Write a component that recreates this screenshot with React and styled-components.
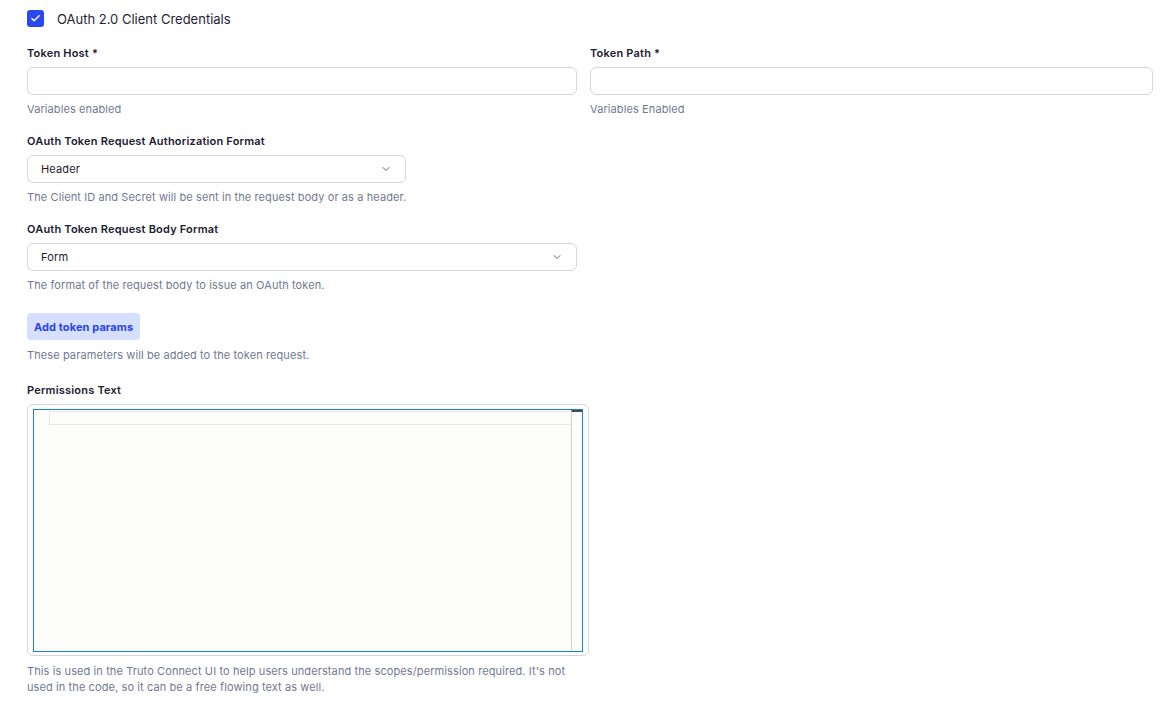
import React from "react";
import styled, { createGlobalStyle } from "styled-components";

const Global = createGlobalStyle`
  html, body { margin: 0; padding: 0; background: #ffffff; }
  body { font-family: Inter, "Noto Sans", sans-serif; color: #1d2030; -webkit-font-smoothing: antialiased; }
  * { box-sizing: border-box; }
`;

const Page = styled.div`
  width: 1168px;
  padding: 10px 15px 0 27px;
`;

const CheckRow = styled.label`
  display: flex;
  align-items: center;
  gap: 13px;
  height: 17px;
  font-size: 13px;
  color: #1f2232;
  margin-bottom: 18px;
`;

const Box = styled.span`
  width: 17px;
  height: 17px;
  border-radius: 3px;
  background: #2848f0;
  display: flex;
  align-items: center;
  justify-content: center;
`;

const Row = styled.div`
  display: grid;
  grid-template-columns: 550px 563px;
  gap: 13px;
`;

const Field = styled.div`
  display: flex;
  flex-direction: column;
  width: ${(p) => p.$w || "100%"};
  margin-bottom: ${(p) => p.$mb ?? 16}px;
`;

const Label = styled.div`
  font-size: 11px;
  font-weight: 600;
  line-height: 16px;
  letter-spacing: 0.2px;
  color: #1d2030;
  margin-bottom: ${(p) => p.$gap ?? 6}px;
`;

const Input = styled.div`
  height: 28px;
  border: 1px solid #d2d5e6;
  border-radius: 6px;
  background: #fff;
`;

const Select = styled.div`
  width: ${(p) => p.$w};
  height: 28px;
  border: 1px solid #d2d5e6;
  border-radius: 6px;
  background: #fff;
  display: flex;
  align-items: center;
  justify-content: space-between;
  padding: 0 13px 0 13px;
  font-size: 11px;
  letter-spacing: 0.15px;
  color: #1d2030;
`;

const Help = styled.div`
  font-size: 11px;
  line-height: 16px;
  letter-spacing: 0.1px;
  color: #737891;
  margin-top: ${(p) => p.$mt ?? 6}px;
`;

const Button = styled.button`
  align-self: flex-start;
  height: 27px;
  padding: 0 7px;
  border: none;
  border-radius: 4px;
  background: #d6dffd;
  color: #2644e6;
  font-family: Inter, "Noto Sans", sans-serif;
  font-size: 11px;
  font-weight: 700;
  letter-spacing: 0.1px;
`;

const EditorFrame = styled.div`
  width: 562px;
  height: 252px;
  border: 1px solid #d2d5e6;
  border-radius: 6px;
  padding: 4px 6px 3px 5px;
`;

const Editor = styled.div`
  width: 550px;
  height: 243px;
  border: 1px solid #1a7ee0;
  background: #fdfdfb;
  display: flex;
`;

const Gutter = styled.div`
  width: 15px;
  flex: none;
`;

const Content = styled.div`
  flex: 1;
  padding-top: 1px;
`;

const ActiveLine = styled.div`
  height: 14px;
  border: 1px solid #e6e6e4;
  border-right: none;
`;

const Scrollbar = styled.div`
  width: 11px;
  flex: none;
  border-left: 1px solid #cfcfcf;
  border-top: 2px solid #4a4a4a;
`;

const Chevron = () => (
  <svg width="12" height="12" viewBox="0 0 24 24" fill="none" stroke="#5f637a" strokeWidth="2" strokeLinecap="round" strokeLinejoin="round">
    <path d="m6 9 6 6 6-6" />
  </svg>
);

export default function App() {
  return (
    <Page>
      <Global />
      <CheckRow>
        <Box>
          <svg width="11" height="11" viewBox="0 0 24 24" fill="none" stroke="#fff" strokeWidth="3" strokeLinecap="round" strokeLinejoin="round">
            <path d="M20 6 9 17l-5-5" />
          </svg>
        </Box>
        OAuth 2.0 Client Credentials
      </CheckRow>

      <Row>
        <Field>
          <Label $gap={6}>Token Host *</Label>
          <Input />
          <Help>Variables enabled</Help>
        </Field>
        <Field>
          <Label $gap={6}>Token Path *</Label>
          <Input />
          <Help>Variables Enabled</Help>
        </Field>
      </Row>

      <Field>
        <Label>OAuth Token Request Authorization Format</Label>
        <Select $w="379px">
          Header
          <Chevron />
        </Select>
        <Help>The Client ID and Secret will be sent in the request body or as a header.</Help>
      </Field>

      <Field $mb={20}>
        <Label>OAuth Token Request Body Format</Label>
        <Select $w="550px">
          Form
          <Chevron />
        </Select>
        <Help>The format of the request body to issue an OAuth token.</Help>
      </Field>

      <Field $mb={19}>
        <Button>Add token params</Button>
        <Help $mt={7}>These parameters will be added to the token request.</Help>
      </Field>

      <Field $w="563px">
        <Label>Permissions Text</Label>
        <EditorFrame>
          <Editor>
            <Gutter />
            <Content>
              <ActiveLine />
            </Content>
            <Scrollbar />
          </Editor>
        </EditorFrame>
        <Help $mt={7}>
          This is used in the Truto Connect UI to help users understand the scopes/permission required. It's not used in the code, so it can be a free flowing text as well.
        </Help>
      </Field>
    </Page>
  );
}
